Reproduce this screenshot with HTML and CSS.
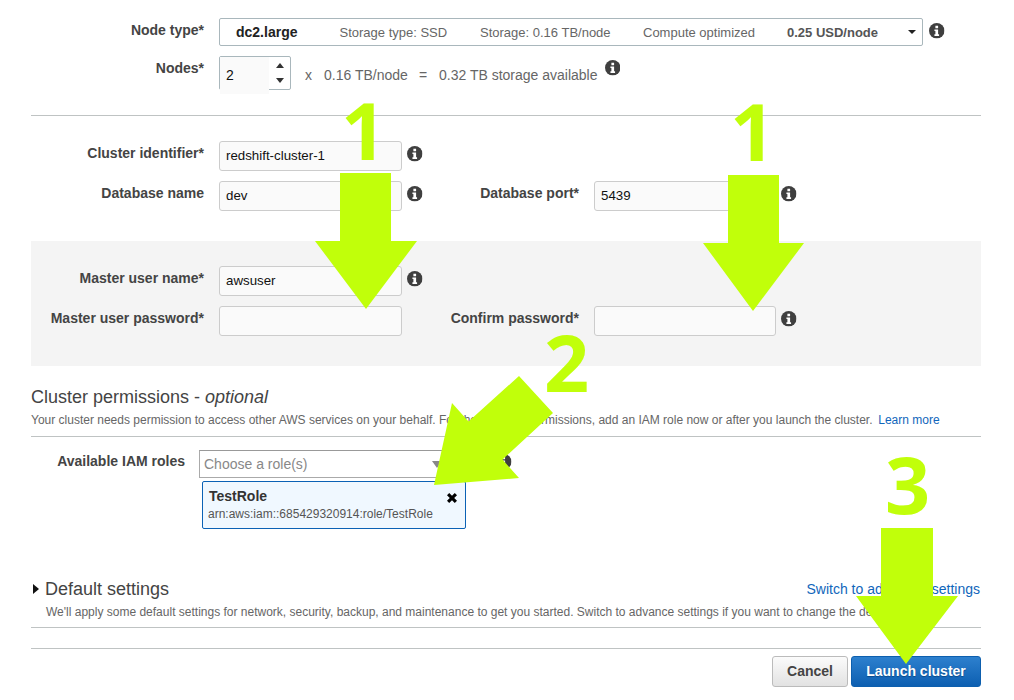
FILE: index.html
```html
<!DOCTYPE html>
<html lang="en">
<head>
<meta charset="utf-8">
<title>Launch cluster</title>
<link rel="stylesheet" href="styles.css">
</head>
<body>
<svg width="0" height="0" class="defs" aria-hidden="true">
  <symbol id="info" viewBox="0 0 16 16">
    <circle cx="8" cy="8" r="8" fill="#3f3f3f"/>
    <path d="M6.6 2.8h2.8v2.5H6.6zM5.6 6.6h3.8v5.1h1v1.6H5.6v-1.6h1V8.200h-1z" fill="#fff"/>
  </symbol>
</svg>
<main class="page">
  <section class="sizing">
    <div class="size-row size-row-first">
      <label class="label size-label">Node type*</label>
      <div class="node-select">
        <b class="node-name">dc2.large</b>
        <span>Storage type: SSD</span>
        <span>Storage: 0.16 TB/node</span>
        <span>Compute optimized</span>
        <b class="node-price">0.25 USD/node</b>
        <i class="caret"></i>
      </div>
      <svg class="info info-select"><use href="#info"/></svg>
    </div>
    <div class="size-row">
      <label class="label size-label">Nodes*</label>
      <div class="spinner">
        <input class="spinner-input" value="2">
        <div class="spinner-buttons"><i class="up"></i><i class="down"></i></div>
      </div>
      <div class="calc"><span>x</span><span>0.16 TB/node</span><span>=</span><span>0.32 TB storage available</span></div>
      <svg class="info info-calc"><use href="#info"/></svg>
    </div>
  </section>
  <hr class="rule">
  <section class="fields fields-db">
    <label class="label">Cluster identifier*</label>
    <input class="text" value="redshift-cluster-1">
    <div class="info-cell"><svg class="info"><use href="#info"/></svg></div>
    <span class="blank"></span><span class="blank"></span><span class="blank"></span>
    <label class="label">Database name</label>
    <input class="text" value="dev">
    <div class="info-cell"><svg class="info"><use href="#info"/></svg></div>
    <label class="label">Database port*</label>
    <input class="text" value="5439">
    <div class="info-cell"><svg class="info"><use href="#info"/></svg></div>
  </section>
  <section class="fields fields-master">
    <label class="label">Master user name*</label>
    <input class="text" value="awsuser">
    <div class="info-cell"><svg class="info"><use href="#info"/></svg></div>
    <span class="blank"></span><span class="blank"></span><span class="blank"></span>
    <label class="label">Master user password*</label>
    <input class="text" value="">
    <span class="blank"></span>
    <label class="label">Confirm password*</label>
    <input class="text" value="">
    <div class="info-cell"><svg class="info"><use href="#info"/></svg></div>
  </section>
  <section class="perms">
    <h2 class="title">Cluster permissions - <em>optional</em></h2>
    <p class="help">Your cluster needs permission to access other AWS services on your behalf. For the required permissions, add an IAM role now or after you launch the cluster.&nbsp; <a class="learn" href="#">Learn more</a></p>
    <hr class="rule">
    <div class="role-row">
      <label class="label role-label">Available IAM roles</label>
      <div class="role-col">
        <div class="role-top">
          <div class="role-select">Choose a role(s)<i class="role-caret"></i></div>
          <svg class="info info-role"><use href="#info"/></svg>
        </div>
        <div class="role-card">
          <div class="role-card-text"><b>TestRole</b><span>arn:aws:iam::685429320914:role/TestRole</span></div>
          <svg class="close" viewBox="0 0 10 10"><path d="M0 2.200L2.200 0 5 2.800 7.800 0 10 2.200 7.200 5 10 7.800 7.800 10 5 7.200 2.200 10 0 7.800 2.800 5z"/></svg>
        </div>
      </div>
    </div>
  </section>
  <section class="defaults">
    <div class="defaults-head">
      <h2 class="title defaults-title"><i class="expand"></i>Default settings</h2>
      <a class="switch" href="#">Switch to advanced settings</a>
    </div>
    <p class="help defaults-help">We'll apply some default settings for network, security, backup, and maintenance to get you started. Switch to advance settings if you want to change the defaults.</p>
    <hr class="rule">
    <hr class="rule rule-actions">
    <div class="actions">
      <button class="btn btn-cancel">Cancel</button>
      <button class="btn btn-launch">Launch cluster</button>
    </div>
  </section>
</main>
<svg class="marks" width="1014" height="700" viewBox="0 0 1014 700" aria-hidden="true">
  <polygon points="340,173 391,173 391,241 417,241 366,309 315,241 340,241"/>
  <polygon points="728,175 779,175 779,243 804,243 753,311 703,243 728,243"/>
  <polygon points="519,376 553,413 502.500,459.500 519,478 434,485 452,403 468.500,421.500"/>
  <polygon points="881,528 933,528 933,596 958,596 906,664 856,596 881,596"/>
  <text x="341" y="160">1</text>
  <text x="730" y="161">1</text>
  <text x="544" y="392">2</text>
  <text x="885" y="514">3</text>
</svg>
</body>
</html>
```
FILE: styles.css
```css
* { box-sizing: border-box; }
html, body { margin: 0; padding: 0; background: #fff; }
body { position: relative; font-family: "Liberation Sans", Arial, sans-serif; font-size: 14px; color: #444; height: 700px; overflow: hidden; }
.defs { position: absolute; }
.page { width: 950px; margin-left: 31px; padding-top: 18px; }
.label { font-weight: 700; font-size: 14px; line-height: 16px; color: #444; text-align: right; padding-right: 15px; padding-top: 4px; }
.info { width: 15.500px; height: 15.500px; display: block; flex: none; }

.size-row { display: flex; align-items: flex-start; }
.size-row-first { margin-bottom: 10px; }
.size-label { width: 188px; flex: none; }
.node-select { width: 704px; height: 28px; border: 1px solid #a9b7bc; border-radius: 2px; display: grid; grid-template-columns: 103.500px 140.500px 163px 144px 121px 9px; padding-left: 16px; align-items: center; font-size: 13px; color: #666; }
.node-name { font-size: 14px; color: #222; }
.node-price { color: #555; }
.caret { width: 0; height: 0; border: 4.500px solid transparent; border-top: 4px solid #222; border-bottom: 0; }
.info-select { margin: 5px 0 0 6px; }

.spinner { width: 72px; height: 34px; border: 1px solid #a9b7bc; border-radius: 2px; display: flex; flex: none; }
.spinner-input { width: 49px; height: 37px; border: 0; background: #fafafa; padding: 0 0 2px 6px; font: 14px "Liberation Sans", Arial, sans-serif; color: #111; }
.spinner-buttons { flex: 1; display: flex; flex-direction: column; align-items: center; justify-content: center; gap: 10px; }
.up, .down { width: 0; height: 0; border: 4.500px solid transparent; }
.up { border-top: 0; border-bottom: 5px solid #333; }
.down { border-bottom: 0; border-top: 5px solid #333; }
.calc { display: flex; margin-left: 14px; padding-top: 11px; color: #666; font-size: 14px; line-height: 16px; white-space: nowrap; }
.calc span:nth-child(1) { width: 19px; }
.calc span:nth-child(2) { width: 95px; }
.calc span:nth-child(3) { width: 20px; }
.info-calc { margin: 4px 0 0 7px; }

.rule { border: 0; height: 1px; margin: 0; background: #bfc3c3; }
.sizing + .rule { margin-top: 25px; }

.fields { display: grid; grid-template-columns: 188px 183px 20px 172px 182px 20px; row-gap: 10px; }
.fields-db { margin-top: 25px; }
.fields-master { margin-top: 30px; width: 950px; background: #f4f4f4; padding: 25px 0 30px; }
.text { height: 30px; width: 100%; border: 1px solid #ccc; border-radius: 3px; background: #fafafa; padding: 0 6px 2px; font: 13.300px "Liberation Sans", Arial, sans-serif; color: #111; }
.info-cell { padding: 5px 0 0 5px; }

.perms { padding-top: 21px; }
.title { margin: 0; font-weight: 400; font-size: 18px; line-height: 20px; color: #444; }
.help { margin: 6px 0 0; font-size: 12px; line-height: 14px; color: #666; white-space: nowrap; }
.perms > .help { margin-bottom: 9px; }
.learn { color: #1166bb; text-decoration: none; margin-left: -1px; }
.role-row { display: flex; margin-top: 13px; }
.role-label { width: 168px; flex: none; padding-right: 14px; padding-top: 3px; }
.role-top { display: flex; }
.role-select { width: 251px; height: 28px; border: 1px solid #aaa; border-top-color: #999; padding: 0 4px; line-height: 26px; font-size: 14px; color: #888; position: relative; }
.role-caret { position: absolute; right: 7px; top: 10px; width: 0; height: 0; border: 5px solid transparent; border-top: 7px solid #888; border-bottom: 0; }
.info-role { margin: 4px 0 0 46px; }
.role-card { margin: 3px 0 0 3px; width: 264px; height: 48px; border: 1px solid #0b62b5; border-radius: 2px; background: #f0f8ff; padding: 6px 8px 0 6px; display: flex; justify-content: space-between; }
.role-card-text { display: flex; flex-direction: column; }
.role-card-text b { font-size: 14px; line-height: 17px; color: #333; }
.role-card-text span { font-size: 12px; line-height: 15px; margin: 2px 0 0 -1px; color: #555; }
.close { width: 10px; height: 10px; margin-top: 5px; fill: #000; }

.defaults { padding-top: 50px; }
.defaults-head { display: flex; justify-content: space-between; align-items: center; }
.defaults-title { display: flex; align-items: center; }
.expand { width: 0; height: 0; border-left: 6px solid #111; border-top: 5px solid transparent; border-bottom: 5px solid transparent; margin: 0 6px 0 2px; }
.switch { color: #1166bb; text-decoration: none; font-size: 14px; margin-right: 1px; }
.defaults-help { margin: 6px 0 8px 15px; }
.rule-actions { margin-top: 20px; }
.actions { display: flex; justify-content: flex-end; gap: 3px; margin-top: 7px; }
.btn { height: 31px; border-radius: 3px; font: 700 14px "Liberation Sans", Arial, sans-serif; padding: 0 0 2px; }
.btn-cancel { width: 76px; border: 1px solid #bbb; background: linear-gradient(#fbfbfb, #e2e2e2); color: #444; }
.btn-launch { width: 130px; border: 1px solid #0d5fae; background: linear-gradient(#2d80ce, #0d5fb1); color: #fff; text-shadow: 0 1px 1px #0a4a8a; }

.marks { position: absolute; left: 0; top: 0; fill: #c1ff0a; }
.marks text { font-family: "Open Sans", sans-serif; font-weight: 700; font-size: 79px; }
```
